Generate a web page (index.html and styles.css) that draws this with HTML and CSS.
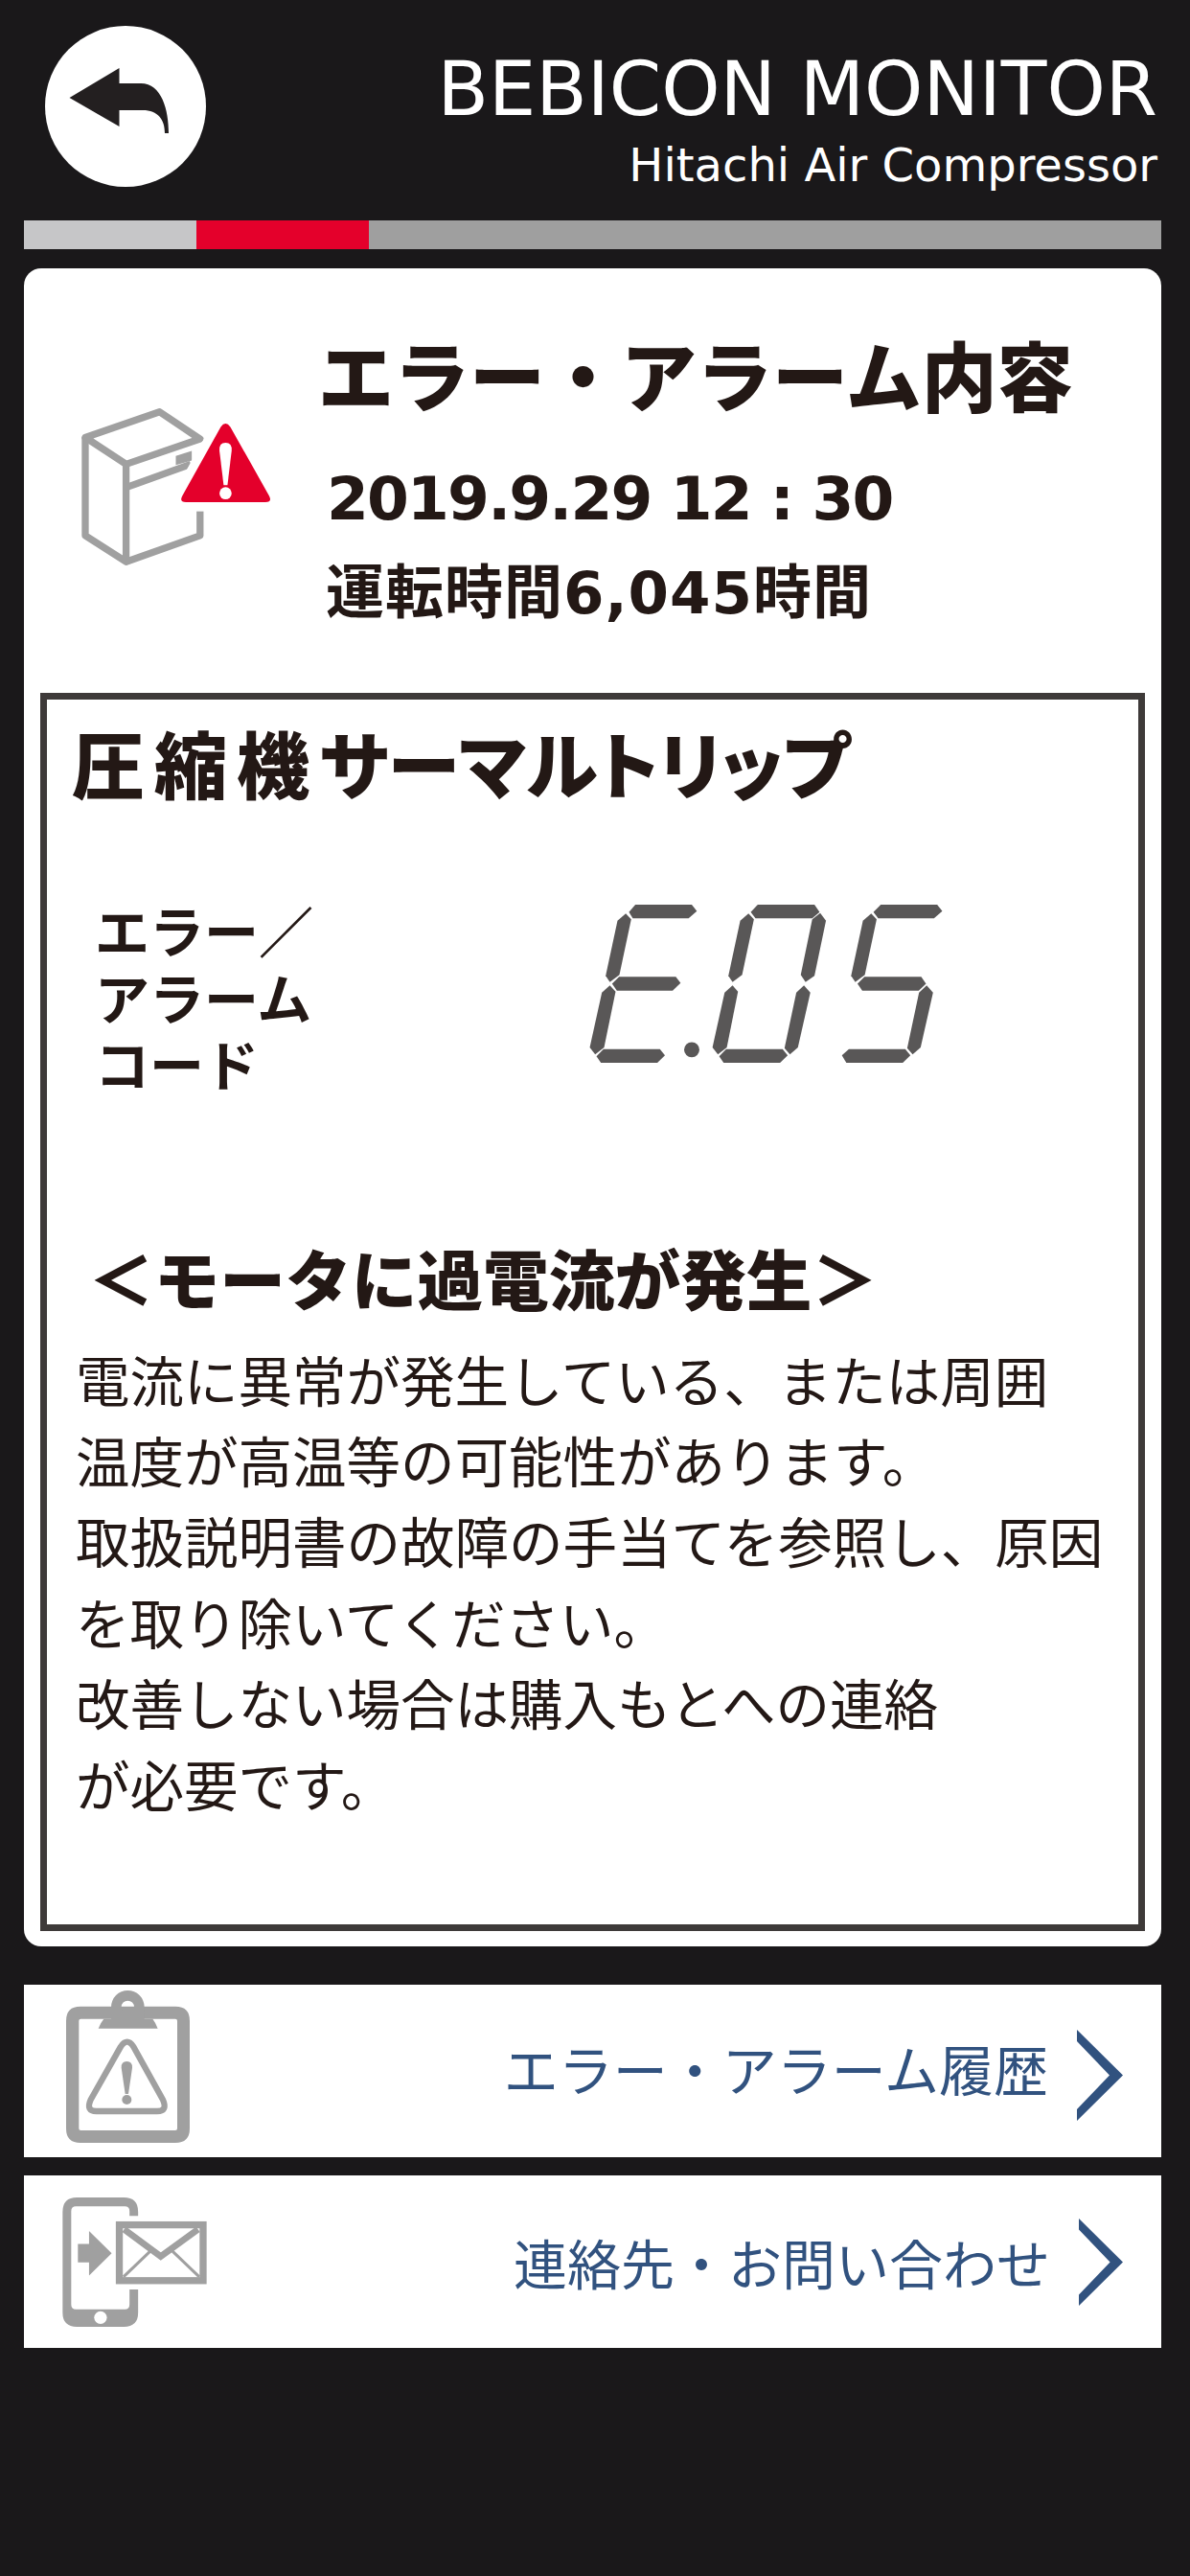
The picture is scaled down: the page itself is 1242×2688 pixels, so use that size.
FILE: index.html
```html
<!DOCTYPE html>
<html lang="ja">
<head>
<meta charset="utf-8">
<title>BEBICON MONITOR</title>
<link rel="stylesheet" href="styles.css">
</head>
<body>
<header class="top">
  <div class="back">
    <svg viewBox="0 0 168 168" width="168" height="168"><path d="M25.5 75 L77.5 44 V60 H100 C122 60 129 88 129 112 H125 C125 98 118 88 102 88 H77.5 V105 Z" fill="#231f20"/></svg>
  </div>
  <div class="titles">
    <div class="title">BEBICON MONITOR</div>
    <div class="subtitle">Hitachi Air Compressor</div>
  </div>
</header>
<div class="progress">
  <div class="seg seg-a"></div>
  <div class="seg seg-b"></div>
  <div class="seg seg-c"></div>
</div>
<main class="card">
  <section class="summary">
    <svg class="machine" viewBox="135 287 595 495" width="198" height="165">
      <g fill="none" stroke="#a0a0a0" stroke-width="22" stroke-linejoin="round">
        <path d="M147 378 L380 298 L507 383 L275 462 Z"/>
        <path d="M507 610 V686 L275 768 L147 686 V378"/>
        <path d="M275 462 V768"/>
        <path d="M275 535 L478 462"/>
      </g>
      <path d="M431 436 L481 420 V450 L431 465 Z" fill="#a0a0a0"/>
      <path d="M572 345 Q587 325 602 345 L723 560 Q735 581 712 581 H463 Q440 581 452 560 Z" fill="#fff" stroke="#fff" stroke-width="56" stroke-linejoin="round"/>
      <path d="M572 345 Q587 325 602 345 L723 560 Q735 581 712 581 H463 Q440 581 452 560 Z" fill="#e4002b"/>
      <path d="M587 395 Q566 395 568 420 L581 528 H593 L606 420 Q608 395 587 395 Z" fill="#fff"/>
      <circle cx="587" cy="553" r="19" fill="#fff"/>
    </svg>
    <div class="summary-text">
      <h1 class="summary-title">エラー・アラーム内容</h1>
      <div class="stamp">2019.9.29 12 : 30</div>
      <div class="hours">運転時間6,045時間</div>
    </div>
  </section>
  <section class="detail">
    <h2 class="detail-title"><span class="wide">圧縮機</span>サーマルトリップ</h2>
    <div class="code-row">
      <div class="code-label">エラー／<br>アラーム<br>コード</div>
      <svg class="code" viewBox="105 132 1106 496" width="369" height="165">
        <g fill="#595757">
          <path d="M228 155 L248 132 H425 L441 152 L415 175 H240 Z"/>
          <path d="M192 182 L218 160 L235 178 L198 352 L168 375 L155 355 Z"/>
          <path d="M175 380 L197 358 H375 L390 378 L365 402 H190 Z"/>
          <path d="M143 408 L168 385 L186 405 L150 580 L122 602 L105 580 Z"/>
          <path d="M126 608 L148 585 H325 L341 605 L317 628 H140 Z"/>
          <circle cx="425" cy="587" r="24"/>
          <path d="M610 155 L632 132 H810 L826 155 L803 175 H625 Z"/>
          <path d="M577 182 L603 160 L620 178 L583 352 L553 375 L540 355 Z"/>
          <path d="M803 178 L828 158 L846 182 L810 355 L782 375 L767 352 Z"/>
          <path d="M528 408 L553 385 L570 405 L535 580 L507 602 L490 580 Z"/>
          <path d="M753 408 L777 385 L797 408 L758 580 L733 602 L716 582 Z"/>
          <path d="M511 608 L533 585 H710 L726 605 L702 628 H525 Z"/>
          <path d="M995 155 L1018 132 H1195 L1211 152 L1185 175 H1010 Z"/>
          <path d="M962 182 L988 160 L1005 178 L968 352 L938 375 L925 355 Z"/>
          <path d="M945 380 L967 358 H1145 L1160 380 L1137 402 H960 Z"/>
          <path d="M1138 408 L1162 385 L1182 408 L1143 580 L1118 602 L1101 582 Z"/>
          <path d="M896 605 L918 585 H1095 L1111 605 L1087 628 H910 Z"/>
        </g>
      </svg>
    </div>
    <h3 class="cause">＜モータに過電流が発生＞</h3>
    <p class="desc">電流に異常が発生している、または周囲<br>温度が高温等の可能性があります。<br>取扱説明書の故障の手当てを参照し、原因<br>を取り除いてください。<br>改善しない場合は購入もとへの連絡<br>が必要です。</p>
  </section>
</main>
<nav class="links">
  <a class="link">
    <svg class="icon-clip" viewBox="207 108 387 477" width="129" height="159">
      <g fill="#a0a0a0">
        <path fill-rule="evenodd" d="M252 158 H549 Q594 158 594 203 V540 Q594 585 549 585 H252 Q207 585 207 540 V203 Q207 158 252 158 Z M253 197 Q247 197 247 203 V540 Q247 546 253 546 H549 Q555 546 555 540 V203 Q555 197 549 197 Z"/>
        <path fill-rule="evenodd" d="M348 160 A52 52 0 0 1 452 160 V197 H478 Q488 210 494 227 H308 Q314 210 325 197 H348 Z M400 140 A20 20 0 1 0 400 180 A20 20 0 1 0 400 140 Z"/>
        <path d="M397 330 Q379 330 380 350 L392 432 H402 L414 350 Q415 330 397 330 Z"/>
        <circle cx="397" cy="450" r="15"/>
      </g>
      <path d="M378 284 Q398 254 418 284 L510 450 Q526 486 492 486 H302 Q268 486 284 450 Z" fill="none" stroke="#a0a0a0" stroke-width="19" stroke-linejoin="round"/>
    </svg>
    <span class="link-text link-text-a">エラー・アラーム履歴</span>
    <svg class="chevron chevron-a" viewBox="0 0 48 95" width="48" height="95"><path d="M0 0 L48 47.5 L0 95 V83 L34 47.5 L0 12 Z" fill="#31527f"/></svg>
  </a>
  <a class="link">
    <svg class="icon-phone" viewBox="195 757 452 406" width="151" height="135">
      <g fill="#a0a0a0">
        <path d="M240 757 H387 Q432 757 432 802 V815 H405 V800 Q405 785 390 785 H237 Q222 785 222 800 V1093 Q222 1108 237 1108 H390 Q405 1108 405 1093 V1046 H432 V1118 Q432 1163 387 1163 H240 Q195 1163 195 1118 V802 Q195 757 240 757 Z"/>
        <path d="M243 903 H278 V862 L349 932 L278 1002 V961 H243 Z"/>
      </g>
      <circle cx="314" cy="1134" r="20" fill="#fff"/>
      <g fill="none" stroke="#a0a0a0">
        <rect x="373" y="843" width="263" height="175" stroke-width="22"/>
        <path d="M388 857 L503 942 L620 857" stroke-width="20"/>
        <path d="M386 1006 L470 926 M624 1006 L540 926" stroke-width="9"/>
      </g>
    </svg>
    <span class="link-text link-text-b">連絡先・お問い合わせ</span>
    <svg class="chevron chevron-b" viewBox="0 0 48 95" width="46" height="91"><path d="M0 0 L48 47.5 L0 95 V83 L34 47.5 L0 12 Z" fill="#31527f"/></svg>
  </a>
</nav>
</body>
</html>
```
FILE: styles.css
```css
* { box-sizing: border-box; }
html, body { margin: 0; padding: 0; }
body { width: 1242px; height: 2688px; background: #1a181a; font-family: "Noto Sans CJK JP", "DejaVu Sans", sans-serif; color: #231815; overflow: hidden; }
.top { height: 230px; padding: 27px 34px 0 47px; display: flex; justify-content: space-between; }
.back { width: 168px; height: 168px; border-radius: 50%; background: #fff; }
.back svg { display: block; }
.titles { text-align: right; color: #fff; font-family: "DejaVu Sans", sans-serif; }
.title { font-size: 78px; line-height: 90px; margin-top: 21px; }
.subtitle { font-size: 48px; line-height: 56px; margin-top: 6px; }
.progress { margin: 0 30px 0 25px; height: 30px; display: flex; }
.seg-a { width: 180px; background: #c6c6c8; }
.seg-b { width: 180px; background: #e4002b; }
.seg-c { flex: 1; background: #9f9f9f; }
.card { margin: 20px 30px 0 25px; height: 1751px; background: #fff; border-radius: 18px; padding: 0 17px; }
.summary { height: 443px; display: flex; align-items: flex-start; padding-left: 43px; }
.machine { margin-top: 146px; flex: none; }
.summary-text { margin-left: 50px; padding-top: 60px; }
.summary-title { font-size: 79px; line-height: 100px; margin: 0 0 0 -1px; font-weight: 900; white-space: nowrap; }
.stamp { font-family: "DejaVu Sans", "Noto Sans CJK JP", sans-serif; font-size: 63px; line-height: 80px; font-weight: 700; letter-spacing: -1.8px; margin: 41px 0 0 8px; white-space: nowrap; }
.hours { font-family: "DejaVu Sans", "Noto Sans CJK JP", sans-serif; font-size: 61px; line-height: 80px; font-weight: 700; letter-spacing: 1px; margin: 18px 0 0 7px; white-space: nowrap; }
.detail { height: 1292px; border: 7px solid #3e3a39; }
.detail-title { font-size: 76px; line-height: 90px; margin: 20px 0 0 26px; font-weight: 900; font-feature-settings: "palt"; white-space: nowrap; }
.wide { letter-spacing: 10px; font-feature-settings: normal; }
.code-row { display: flex; margin-top: 95px; padding-left: 50px; align-items: flex-start; }
.code-label { width: 230px; font-size: 57px; line-height: 69.5px; font-weight: 700; }
.code { margin: 9px 0 0 286px; flex: none; }
.cause { font-size: 68.7px; line-height: 90px; margin: 143px 0 0 43px; font-weight: 900; white-space: nowrap; }
.desc { font-size: 56.5px; line-height: 84.4px; margin: 19px 0 0 30px; white-space: nowrap; }
.links { margin: 40px 30px 0 25px; display: flex; flex-direction: column; gap: 19px; }
.link { height: 180px; background: #fff; display: flex; align-items: center; }
.icon-clip { margin: 0 0 10px 44px; flex: none; }
.icon-phone { margin-left: 40px; flex: none; }
.link-text { margin-left: auto; font-size: 57px; color: #31527f; font-weight: 400; white-space: nowrap; }
.link-text-a { margin-bottom: 8px; }
.link-text-b { margin-bottom: 2px; font-size: 56px; }
.chevron { margin: 0 40px 0 30px; flex: none; }
.chevron-a { margin-top: 9px; }
.chevron-b { margin-left: 30px; }
```
